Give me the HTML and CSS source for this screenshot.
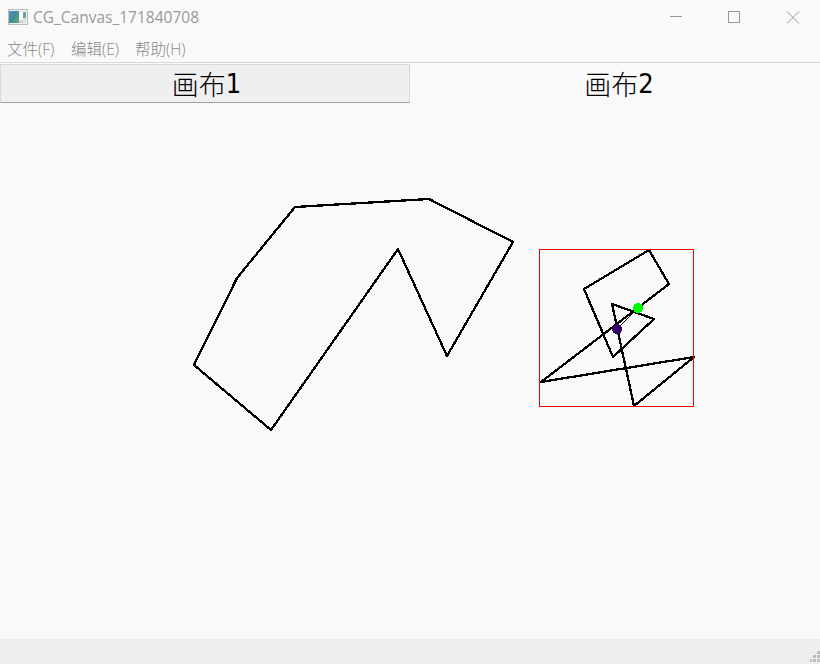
FILE: index.html
```html
<!DOCTYPE html>
<html lang="zh-CN">
<head>
<meta charset="utf-8">
<title>CG_Canvas_171840708</title>
<link rel="stylesheet" href="styles.css">
</head>
<body>
<div class="window">
  <header class="titlebar">
    <svg class="app-icon" width="20" height="16" viewBox="0 0 20 16">
      <defs>
        <linearGradient id="pane" x1="0" y1="0" x2="1" y2="1"><stop offset="0" stop-color="#5b8fc0"/><stop offset=".5" stop-color="#3f8f96"/><stop offset="1" stop-color="#5eb26c"/></linearGradient>
      </defs>
      <rect width="20" height="16" fill="#b9bdc0"/>
      <rect x="1" y="1" width="18" height="14" fill="#eceded"/>
      <rect x="1" y="2" width="10" height="12" fill="url(#pane)"/>
      <rect x="11" y="3" width="4" height="8" fill="#fafafa"/>
      <rect x="11" y="11" width="4" height="3" fill="#d2d3d4"/>
      <rect x="15" y="3" width="3" height="6" fill="url(#pane)" opacity=".8"/>
      <rect x="15" y="9" width="3" height="5" fill="#dedfe0"/>
    </svg>
    <span class="title">CG_Canvas_171840708</span>
    <svg class="controls" width="130" height="13" viewBox="0 0 130 13" fill="none" stroke="#999">
      <path d="M0 5.5H12"/>
      <rect x="58.5" y=".5" width="11" height="11"/>
      <path d="M117 .5l12 12M129 .5l-12 12"/>
    </svg>
  </header>
  <nav class="menubar"><span>文件(F)</span><span>编辑(E)</span><span>帮助(H)</span></nav>
  <div class="tabs"><div class="tab inactive"><span class="label">画布</span><span class="number">1</span></div><div class="tab active"><span class="label">画布</span><span class="number">2</span></div></div>
  <main class="canvas">
    <svg width="820" height="536" viewBox="0 103 820 536" shape-rendering="crispEdges" fill="none">
      <g stroke="#000" stroke-width="2.3" stroke-linejoin="round">
        <path d="M295 207L429 199L513 242L447 356L398 249L271 430L194 365L237 278Z"/>
        <path d="M649 250L669 284L541 382L694 357L634 406L612 304L654 319L613 357L584 289Z"/>
      </g>
      <rect x="539.5" y="249.5" width="154" height="157" stroke="#f00"/>
      <path d="M619 328L633 314" stroke="#f9f9f9" stroke-width="2"/>
      <path d="M618 328L633 313" stroke="#000" stroke-width="1"/>
      <circle cx="617" cy="329" r="5" fill="#306"/>
      <circle cx="638" cy="308" r="5" fill="#0f0"/>
    </svg>
  </main>
  <footer class="statusbar">
    <svg width="10" height="11" viewBox="0 0 10 11" fill="#bfbfbf"><path d="M7 0h3v3H7zM3 4h3v3H3zM7 4h3v3H7zM0 8h2v3H0zM3 8h3v3H3zM7 8h3v3H7z"/></svg>
  </footer>
</div>
</body>
</html>
```
FILE: styles.css
```css
* { box-sizing: border-box; }
body { margin: 0; overflow: hidden; background: #f9f9f9; font-family: "Noto Sans", "Noto Sans CJK SC", sans-serif; }
.window { display: flex; flex-direction: column; width: 820px; height: 664px; }
.titlebar { display: flex; align-items: center; height: 34px; padding: 0 20px 0 8px; }
.title { flex: 1; margin-left: 5px; font: 15.5px/34px "Open Sans", sans-serif; color: #999; }
.app-icon { flex: none; }
.controls { flex: none; }
.menubar { display: flex; gap: 16px; height: 28px; padding-left: 7px; font-family: "Open Sans", "Noto Sans CJK SC", sans-serif; font-weight: 300; font-size: 15.5px; line-height: 30px; color: #888; }
.menubar span { width: 48px; white-space: nowrap; }
.tabs { display: flex; height: 41px; border-top: 1px solid #dadada; }
.tab { display: flex; justify-content: center; font-size: 27px; line-height: 41px; color: #000; }
.tab.inactive { width: 410px; margin-top: 1px; height: 39px; padding-left: 3px; line-height: 37px; background: #efefef; border: 1px solid #d9d9d9; border-bottom-color: #a0a0a0; }
.tab.active { flex: 1; padding-left: 8px; }
.label { font-family: "Noto Sans CJK SC", sans-serif; font-weight: 300; }
.number { font-family: "DejaVu Sans Condensed", "DejaVu Sans", sans-serif; font-stretch: condensed; }
.canvas { height: 536px; }
.canvas svg { display: block; }
.statusbar { display: flex; justify-content: flex-end; align-items: flex-end; height: 25px; background: #efefef; }
.statusbar svg { margin-bottom: 2px; }
```
